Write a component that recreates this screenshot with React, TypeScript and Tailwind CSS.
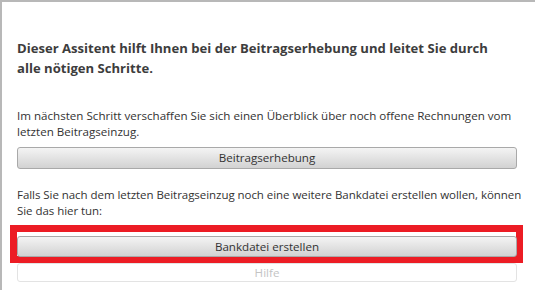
export default function App() {
  const font = { fontFamily: '"Open Sans", "Noto Sans", sans-serif' };
  return (
    <div
      className="w-[535px] h-[290px] bg-white border-t-2 border-l-2 border-[#b8b8b8] overflow-hidden box-border"
      style={font}
    >
      <div className="pl-[15px] pr-[18px] pt-[36px] flex flex-col">
        <h1 className="text-[13.1px] leading-[20px] font-bold text-[#3d3d3d] pr-[20px]">
          Dieser Assitent hilft Ihnen bei der Beitragserhebung und leitet Sie durch alle nötigen Schritte.
        </h1>
        <p className="mt-[30px] text-[11.6px] leading-[16px] text-[#333]">
          Im nächsten Schritt verschaffen Sie sich einen Überblick über noch offene Rechnungen vom letzten Beitragseinzug.
        </p>
        <button className="mt-[7px] h-[22px] w-full rounded-[3px] border border-[#a9a9a9] bg-gradient-to-b from-[#f4f4f4] to-[#d2d2d2] text-[11.6px] text-[#333] leading-none">
          Beitragserhebung
        </button>
        <p className="mt-[18px] -mr-[8px] text-[11.5px] leading-[16px] text-[#333] tracking-[-0.05px]">
          Falls Sie nach dem letzten Beitragseinzug noch eine weitere Bankdatei erstellen wollen, können Sie das hier tun:
        </p>
        <div className="relative mt-[14px]">
          <div className="absolute -left-[7px] -right-[6px] -top-[8px] -bottom-[6px] border-[7px] border-[#ec1c24]" />
          <button className="relative h-[21px] w-full rounded-[3px] border border-[#a9a9a9] bg-gradient-to-b from-[#f4f4f4] to-[#d2d2d2] text-[11.6px] text-[#333] leading-none">
            Bankdatei erstellen
          </button>
        </div>
        <button className="mt-[6px] h-[19px] w-full rounded-[3px] border border-[#e3e3e3] bg-white text-[11.6px] text-[#c4c4c4] leading-none">
          Hilfe
        </button>
      </div>
    </div>
  );
}
